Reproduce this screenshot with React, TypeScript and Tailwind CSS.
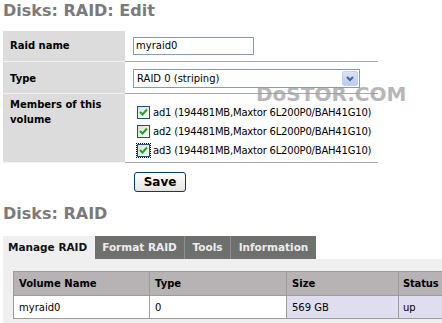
const members = [
  'ad1 (194481MB,Maxtor 6L200P0/BAH41G10)',
  'ad2 (194481MB,Maxtor 6L200P0/BAH41G10)',
  'ad3 (194481MB,Maxtor 6L200P0/BAH41G10)',
];

function XpCheck({ focused }: { focused?: boolean }) {
  return (
    <span className={`flex items-center justify-center w-[15px] h-[15px] ${focused ? 'outline outline-1 outline-dotted outline-black -outline-offset-1' : ''}`}>
      <span className="w-[13px] h-[13px] border border-[#1c5180] bg-gradient-to-br from-[#dcdcd7] to-white flex items-center justify-center">
        <svg width="9" height="9" viewBox="0 0 9 9">
          <path d="M1 4 L3.5 6.5 L8 1.5" stroke="#21a121" strokeWidth="2" fill="none" />
        </svg>
      </span>
    </span>
  );
}

export default function App() {
  return (
    <div className="relative w-[442px] h-[323px] overflow-hidden bg-white font-['DejaVu_Sans',sans-serif] text-[10px] text-black">
      <h1 className="pl-[3px] pt-[1px] text-[16px] leading-[20px] font-bold text-[#7a7a7a]">Disks: RAID: Edit</h1>

      <div className="mt-[10px] ml-[3px] w-[375px] grid grid-cols-[122px_1fr]">
        <div className="h-[31px] bg-[#dcdcdc] border-b border-[#f4f4f4] pl-[7px] pt-[7px] font-bold">Raid name</div>
        <div className="h-[31px] border-b border-[#a8a8a8] pl-[8px] pt-[6px]">
          <div className="w-[121px] h-[18px] border border-[#7f9db9] pl-[2px] leading-[16px]">myraid0</div>
        </div>

        <div className="h-[32px] bg-[#dcdcdc] border-b border-[#f4f4f4] pl-[7px] pt-[9px] font-bold">Type</div>
        <div className="h-[32px] border-b border-[#a8a8a8] pl-[8px] pt-[7px]">
          <div className="w-[227px] h-[19px] border border-[#7f9db9] flex items-center justify-between pl-[3px] pr-[1px]">
            <span>RAID 0 (striping)</span>
            <span className="w-[16px] h-[15px] rounded-[2px] bg-gradient-to-b from-[#d8e4fb] to-[#b5cbf6] border border-[#c2d3f6] flex items-center justify-center">
              <svg width="8" height="6" viewBox="0 0 8 6">
                <path d="M1 1 L4 4 L7 1" stroke="#4d6185" strokeWidth="2" fill="none" />
              </svg>
            </span>
          </div>
        </div>

        <div className="h-[69px] bg-[#dcdcdc] border-b border-[#f4f4f4] pl-[7px] pt-[3px] font-bold leading-[15px]">
          Members of this<br />volume
        </div>
        <div className="h-[69px] border-b border-[#a8a8a8] pl-[11px] pt-[11px] flex flex-col gap-[4px]">
          {members.map((m, i) => (
            <label key={m} className="flex items-center gap-[2px] h-[15px] whitespace-nowrap">
              <XpCheck focused={i === 2} />
              <span className="tracking-[-0.2px]">{m}</span>
            </label>
          ))}
        </div>
      </div>

      <div className="pl-[134px] pt-[9px]">
        <button className="w-[52px] h-[20px] rounded-[3px] border border-[#003c74] bg-gradient-to-b from-white to-[#e6e5dc] text-[12px] font-bold leading-[18px]">
          Save
        </button>
      </div>

      <h2 className="pl-[3px] pt-[12px] text-[16px] leading-[20px] font-bold text-[#7a7a7a]">Disks: RAID</h2>

      <div className="mt-[12px] ml-[3px] flex h-[23px] font-bold text-[10.5px]">
        <div className="w-[92px] bg-[#efefef] flex items-center pl-[5px] text-[#111]">Manage RAID</div>
        <div className="w-[90px] bg-[#6e706d] flex items-center justify-center text-[#ececec] border-r border-[#8e908d]">Format RAID</div>
        <div className="w-[46px] bg-[#6e706d] flex items-center justify-center text-[#ececec] border-r border-[#8e908d]">Tools</div>
        <div className="w-[85px] bg-[#6e706d] flex items-center justify-center text-[#ececec]">Information</div>
      </div>

      <div className="ml-[3px] h-[80px] bg-[#efefef] pl-[10px] pt-[12px]">
        <div className="grid grid-cols-[136px_137px_112px_60px] border-t border-l border-[#9c9c9c]">
          <div className="h-[24px] bg-[#b7b3b5] border-r border-b border-[#9c9c9c] pl-[5px] flex items-center font-bold">Volume Name</div>
          <div className="h-[24px] bg-[#b7b3b5] border-r border-b border-[#9c9c9c] pl-[5px] flex items-center font-bold">Type</div>
          <div className="h-[24px] bg-[#b7b3b5] border-r border-b border-[#9c9c9c] pl-[5px] flex items-center font-bold">Size</div>
          <div className="h-[24px] bg-[#b7b3b5] border-b border-[#9c9c9c] pl-[4px] flex items-center font-bold tracking-[-0.2px]">Status</div>
          <div className="h-[23px] bg-white border-r border-b border-[#9c9c9c] pl-[5px] flex items-center">myraid0</div>
          <div className="h-[23px] bg-white border-r border-b border-[#9c9c9c] pl-[5px] flex items-center">0</div>
          <div className="h-[23px] bg-[#dedeee] border-r border-b border-[#9c9c9c] pl-[5px] flex items-center">569 GB</div>
          <div className="h-[23px] bg-[#dedeee] border-b border-[#9c9c9c] pl-[4px] flex items-center">up</div>
        </div>
      </div>

      <div className="absolute left-[256px] top-[79px] text-[20px] font-bold text-[#9a9a9a] opacity-70 pointer-events-none">
        DoSTOR.COM
      </div>
    </div>
  );
}
